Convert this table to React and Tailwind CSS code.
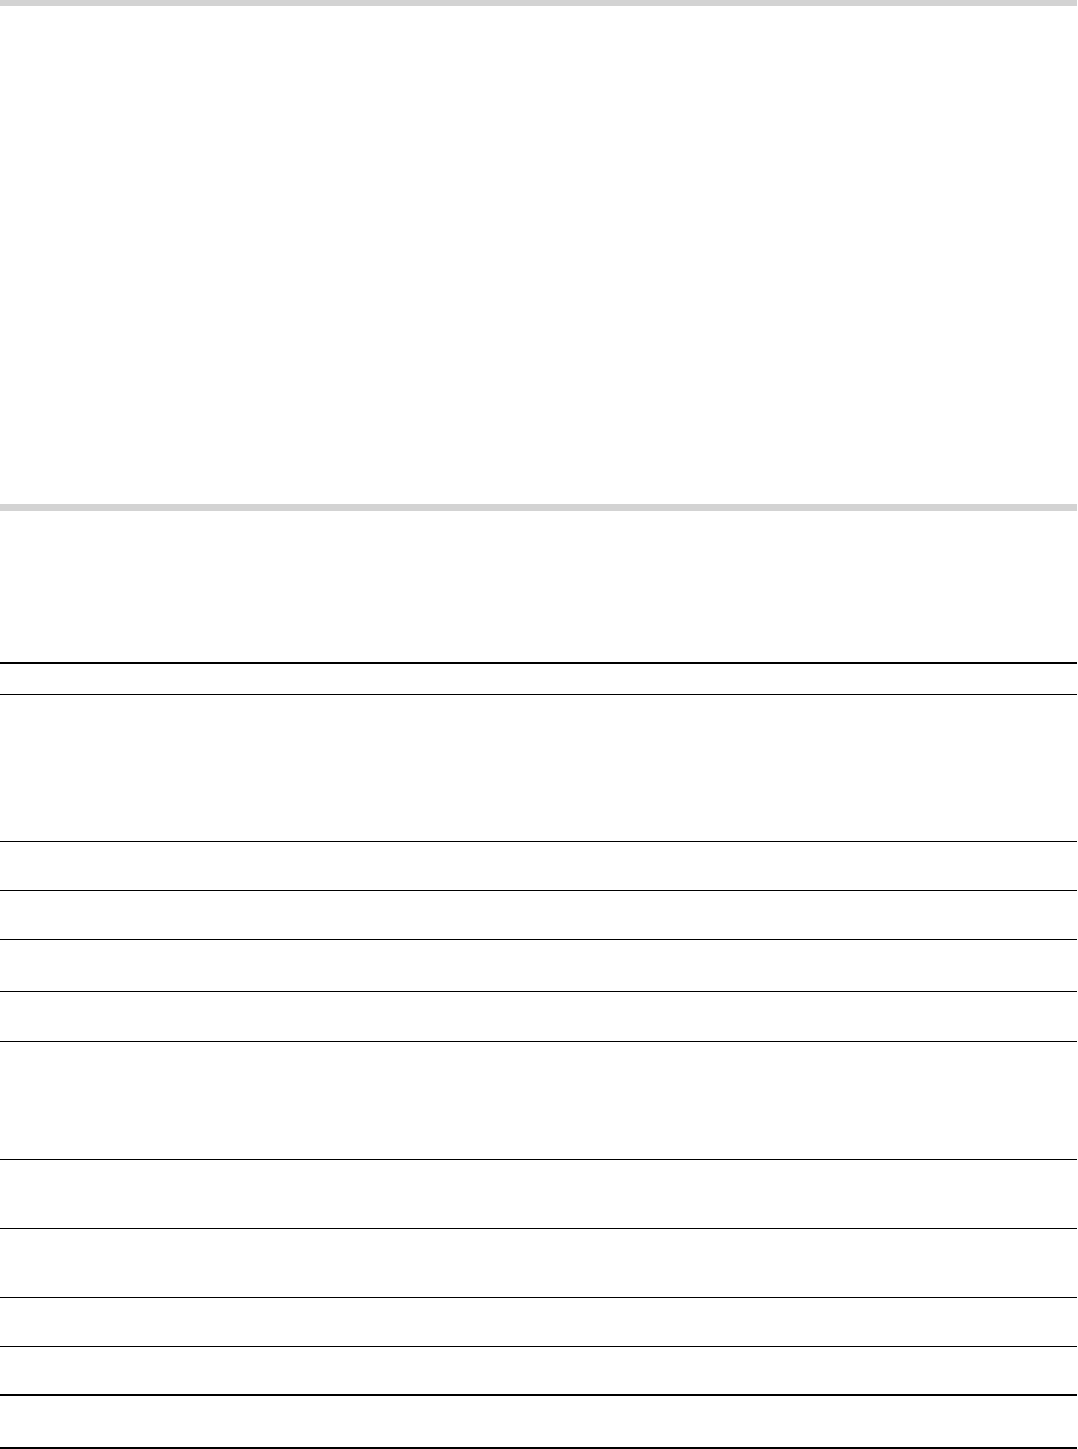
// heights include the bottom border (preflight uses border-box)
const ROWS = [
    { h: "h-[147px]", thick: false },
    { h: "h-[49px]", thick: false },
    { h: "h-[49px]", thick: false },
    { h: "h-[52px]", thick: false },
    { h: "h-[50px]", thick: false },
    { h: "h-[118px]", thick: false },
    { h: "h-[69px]", thick: false },
    { h: "h-[69px]", thick: false },
    { h: "h-[49px]", thick: false },
    { h: "h-[49px]", thick: true },
    { h: "h-[53px]", thick: true },
];

export default function App() {
    return (
        <div className="w-[1077px] bg-white font-['Liberation_Sans',Arial,sans-serif] text-sm text-black">
            {/* header band */}
            <div className="h-[6px] bg-[#d3d3d3]" />
            <div className="h-[498px]" />
            <div className="h-[7px] bg-[#d3d3d3]" />
            <div className="h-[151px]" />

            {/* table */}
            <div className="border-t-2 border-black">
                <div className="h-[31px] border-b border-black" />
                {ROWS.map((row, i) => (
                    <div
                        key={i}
                        className={`${row.h} ${row.thick ? "border-b-2" : "border-b"} border-black`}
                    />
                ))}
            </div>
        </div>
    );
}
